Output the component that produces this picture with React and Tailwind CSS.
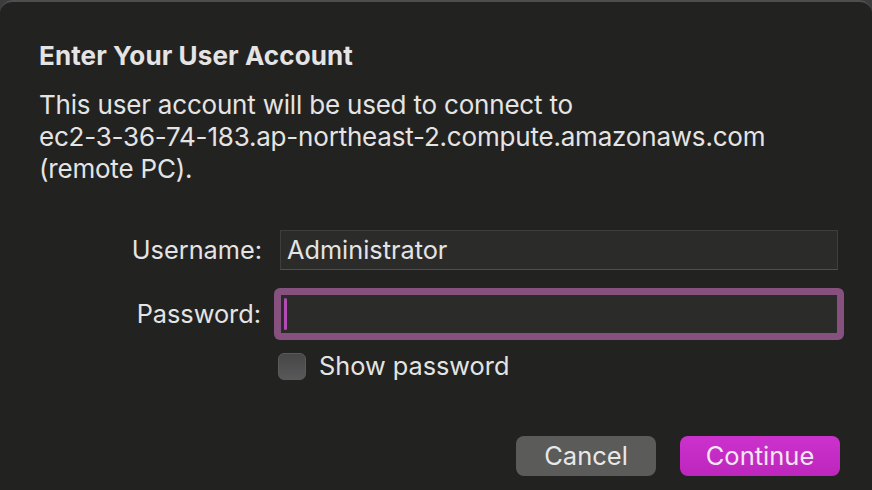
import React from "react";

const font = { fontFamily: "Inter, 'Liberation Sans', sans-serif" };

export default function App() {
  return (
    <div className="w-[872px] h-[490px] bg-[#3c3c3c] overflow-hidden" style={font}>
      <div className="h-full rounded-t-[13px] border-t-2 border-[#4e4e4e] bg-[#222220] text-[#e4e4e4] flex flex-col">
        <div className="px-[39px] pt-[40px]">
          <h1 className="text-[26px] font-bold leading-[28px] tracking-[0.1px]">Enter Your User Account</h1>
          <p className="mt-[19px] text-[26px] leading-[32px] tracking-[-0.2px]">
            This user account will be used to connect to
            <br />
            ec2-3-36-74-183.ap-northeast-2.compute.amazonaws.com
            <br />
            (remote PC).
          </p>
        </div>

        <div className="mt-[45px] grid grid-cols-[262px_1fr] gap-x-[18px] items-center pr-[34px] text-[25.3px]">
          <label className="text-right leading-none">Username:</label>
          <div className="h-[40px] bg-[#2b2b2a] border border-[#3e3e3d] border-b-[#4f4f4e] flex items-center px-[6px] leading-none">
            Administrator
          </div>

          <label className="mt-[18px] text-right leading-none -translate-x-px">Password:</label>
          <div className="mt-[18px] -ml-[6px] -mr-[6px] p-[7px] rounded-[6px] bg-[#86517f]">
            <div className="h-[38px] bg-[#2b2b2a] flex items-center px-[3px]">
              <span className="w-[3px] h-[32px] rounded-full bg-[#b24bb4]" />
            </div>
          </div>

          <div />
          <div className="mt-[12px] h-[28px] flex items-center gap-[13px] -ml-[2px]">
            <span className="w-[28px] h-[27px] rounded-[6px] bg-gradient-to-b from-[#474747] to-[#585858] border border-[#5a5a5a]" />
            <span className="leading-none">Show password</span>
          </div>
        </div>

        <div className="mt-auto mb-[14px] flex justify-end gap-[24px] pr-[32px]">
          <button className="w-[140px] h-[40px] rounded-[8px] bg-[#5b5b5a] text-[25.5px] text-[#e8e8e8]">Cancel</button>
          <button className="w-[160px] h-[40px] rounded-[8px] bg-gradient-to-b from-[#cc31cc] to-[#bd26bd] text-[25.5px] text-[#f2e6f2]">Continue</button>
        </div>
      </div>
    </div>
  );
}
